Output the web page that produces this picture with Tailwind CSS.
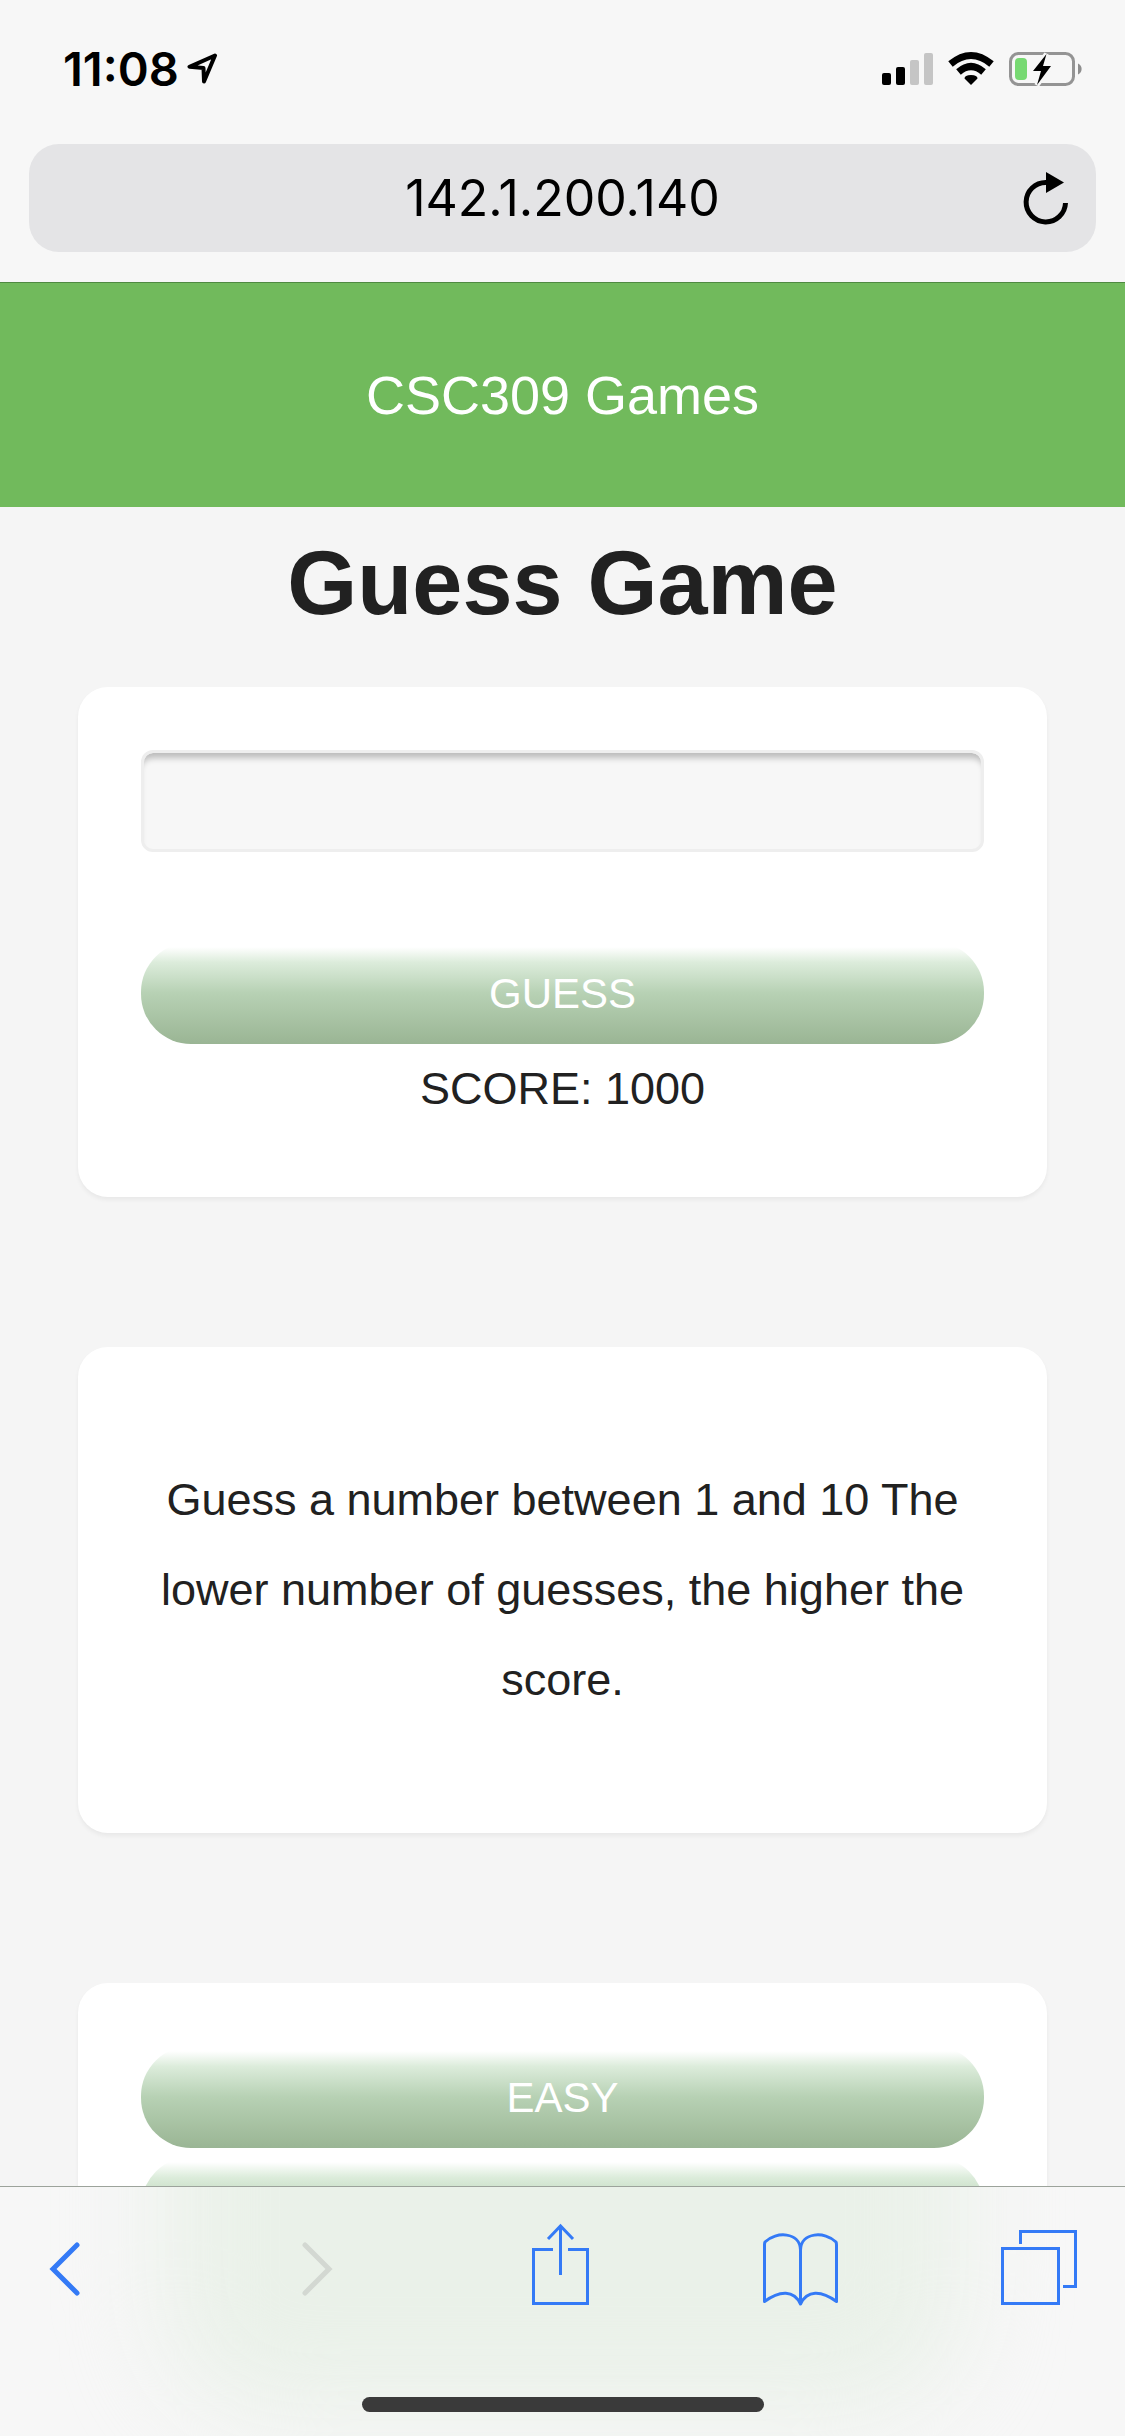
<!DOCTYPE html>
<html lang="en">
<head>
<meta charset="utf-8">
<meta name="viewport" content="width=device-width, initial-scale=1">
<title>CSC309 Games</title>
<script src="https://cdn.jsdelivr.net/npm/@tailwindcss/browser@4"></script>
</head>
<body class="flex h-screen flex-col overflow-hidden bg-[#f5f5f5] font-['Liberation_Sans',Arial,sans-serif] text-[#212121]">

  <!-- Status bar and address bar -->
  <header class="shrink-0 border-b border-[#4f8a41] bg-[#f7f7f7] pb-[30px] font-[Inter,sans-serif] text-black">
    <div class="flex h-36 items-center justify-between pr-[42px] pl-[63px] pb-1.5">
      <div class="flex items-center gap-2">
        <span class="text-[47px] font-semibold">11:08</span>
        <svg class="size-8" viewBox="187 53 32 32" fill="none" stroke="#000" stroke-width="4" stroke-linejoin="round"><path d="M215 55.500 189.500 66.800 203.500 68 204 81.500Z"/></svg>
      </div>
      <svg class="h-9 w-[201px]" viewBox="882 51 201 36">
        <rect x="882" y="73" width="9" height="12" rx="2"/><rect x="896" y="67" width="9" height="18" rx="2"/>
        <rect x="910" y="60" width="9" height="25" rx="2" fill="#c5c5c5"/><rect x="924" y="53" width="9" height="32" rx="2" fill="#c5c5c5"/>
        <path d="M971 85 964.500 78.500Q964.500 75 971 75T977.500 78.500Z"/>
        <path d="M958.500 72Q971 61 983.500 72M950.500 64Q971 47 991.500 64" fill="none" stroke="#000" stroke-width="7"/>
        <rect x="1010.500" y="53.500" width="63" height="31" rx="8" fill="none" stroke="#949494" stroke-width="3"/>
        <path d="M1078 63.500a6 6 0 0 1 0 11Z" fill="#8e8e8e"/>
        <rect x="1015" y="58" width="12" height="22" rx="4" fill="#77d972"/>
        <path d="M1046.500 54 1033 71H1041L1037 85 1051 66H1043Z" stroke="#f7f7f7" stroke-width="5" paint-order="stroke"/>
      </svg>
    </div>
    <div class="mx-[29px] grid h-[108px] grid-cols-[1fr_auto_1fr] items-center rounded-[30px] bg-[#e4e4e6] px-[26px]">
      <span class="col-start-2 text-[50px]">142.1.200.140</span>
      <button type="button" aria-label="Reload" class="justify-self-end">
        <svg class="h-[54px] w-[48px]" viewBox="1022 171 48 54"><path d="M1065.500 203A19.700 19.700 0 1 1 1046 182.500" fill="none" stroke="#000" stroke-width="5"/><path d="M1046 172 1064 182.500 1046 193Z"/></svg>
      </button>
    </div>
  </header>

  <!-- Web page -->
  <main class="min-h-0 flex-1 overflow-hidden">
    <div class="flex h-56 items-center justify-center bg-[#71ba5c] text-[54px] text-white">CSC309 Games</div>
    <h1 class="pt-[26px] pb-[54px] text-center text-[90px] leading-[100px] font-bold">Guess Game</h1>

    <div class="mx-[78px] flex flex-col gap-[150px]">
      <form class="flex h-[510px] flex-col rounded-[30px] bg-white px-[63px] pt-[63px] text-center shadow-[0_3px_4px_rgba(0,0,0,0.05)]">
        <input type="text" aria-label="Your guess" class="h-[102px] w-full rounded-xl border-3 border-[#eeeeee] bg-[#f7f7f7] px-6 text-[42px] shadow-[inset_0_9px_6px_-4px_rgba(0,0,0,0.24)] outline-none">
        <button type="button" class="mt-[90px] h-[102px] w-full rounded-[50px] bg-[linear-gradient(to_bottom,#ffffff_5%,#dcecdb_20%,#b7d1b4_50%,#9ab594_100%)] text-[42px] text-white">GUESS</button>
        <output class="block text-[45px] leading-[90px]">SCORE: 1000</output>
      </form>

      <section class="flex h-[486px] items-center rounded-[30px] bg-white px-[63px] text-center shadow-[0_3px_4px_rgba(0,0,0,0.05)]">
        <p class="w-full text-[45px] leading-[90px]">Guess a number between 1 and 10 The lower number of guesses, the higher the score.</p>
      </section>

      <section class="flex flex-col gap-[9px] rounded-[30px] bg-white p-[63px] shadow-[0_3px_4px_rgba(0,0,0,0.05)]">
        <button type="button" class="h-[102px] w-full rounded-[50px] bg-[linear-gradient(to_bottom,#ffffff_5%,#dcecdb_20%,#b7d1b4_50%,#9ab594_100%)] text-[42px] text-white">EASY</button>
        <button type="button" aria-label="Next difficulty" class="h-[102px] w-full rounded-[50px] bg-[linear-gradient(to_bottom,#ffffff_5%,#dcecdb_20%,#b7d1b4_50%,#9ab594_100%)] text-[42px] text-white"></button>
      </section>
    </div>
  </main>

  <!-- Browser toolbar, with the page's green showing through -->
  <footer class="relative isolate flex h-[250px] shrink-0 flex-col justify-between overflow-hidden border-t border-[#9ca39b] bg-[#f7f7f7] pb-6">
    <div class="absolute inset-x-[165px] -top-60 bottom-6 -z-10 rounded-[110px] bg-[#eaf1e9] blur-[48px]"></div>
    <nav class="grid h-[156px] grid-cols-[252fr_230fr_231fr_238fr_77fr] items-center justify-items-start pr-12 pl-[49px] text-[#347af6]">
      <button type="button" aria-label="Back"><svg class="h-[84px] w-8" viewBox="49 2223 32 84" fill="none" stroke="currentColor" stroke-width="5" stroke-linecap="round"><path d="M77 2245 53 2269 77 2293"/></svg></button>
      <button type="button" aria-label="Forward" disabled class="text-[#d3d8d2]"><svg class="h-[84px] w-8" viewBox="301 2223 32 84" fill="none" stroke="currentColor" stroke-width="5" stroke-linecap="round"><path d="M305 2245 329 2269 305 2293"/></svg></button>
      <button type="button" aria-label="Share"><svg class="h-[84px] w-[60px]" viewBox="531 2223 60 84" fill="none" stroke="currentColor" stroke-width="3"><path d="M553 2249.500H533.500V2303.500H587.500V2249.500H568M560.500 2275V2226M548 2239 560.500 2226 573 2239"/></svg></button>
      <button type="button" aria-label="Bookmarks"><svg class="h-[84px] w-[78px]" viewBox="762 2223 78 84" fill="none" stroke="currentColor" stroke-width="3" stroke-linejoin="round"><path d="M800.500 2304V2250M800.500 2250C800 2232 776 2231 765 2242Q764.500 2243 764.500 2245V2301.500C780 2290 794 2290 800.500 2304C807 2290 821 2290 836.500 2301.500V2245Q836.500 2243 836 2242C825 2231 801 2232 800.500 2250"/></svg></button>
      <button type="button" aria-label="Tabs"><svg class="h-[84px] w-[77px]" viewBox="1000 2223 77 84" fill="none" stroke="currentColor" stroke-width="3"><path d="M1002.500 2248.500H1058.500V2303.500H1002.500ZM1020.500 2244V2231.500H1075.500V2286.500H1063"/></svg></button>
    </nav>
    <div class="mx-auto h-[15px] w-[402px] rounded-full bg-[#3a3a3a]"></div>
  </footer>
</body>
</html>
